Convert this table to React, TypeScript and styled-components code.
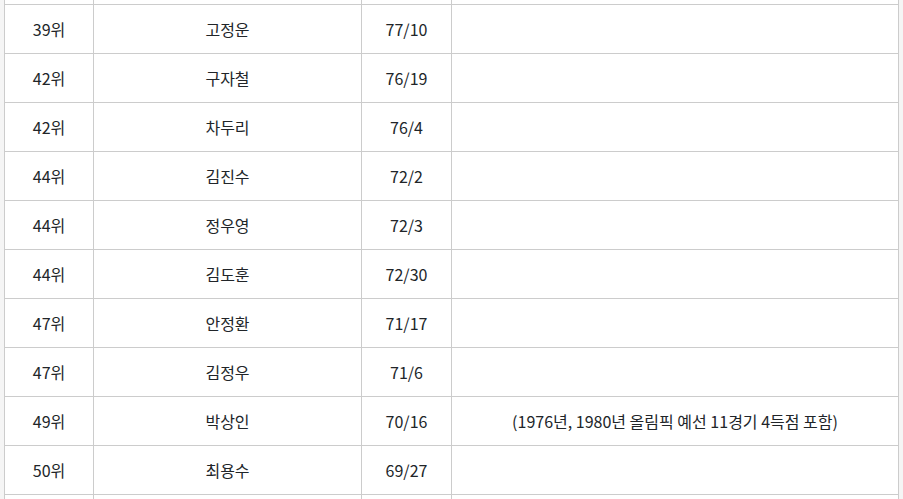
import React from "react";
import styled, { createGlobalStyle } from "styled-components";

const Global = createGlobalStyle`
  html, body { margin: 0; padding: 0; background: #f5f5f5; }
  body { font-family: "Noto Sans CJK KR", "Noto Sans", sans-serif; overflow: hidden; }
`;

const Page = styled.div`
  height: 499px;
  overflow: hidden;
  padding: 0 5px 0 4px;
  background: #f5f5f5;
`;

const Table = styled.table`
  width: 894px;
  margin-top: -45px;
  border-collapse: collapse;
  table-layout: fixed;
  background: #ffffff;
  color: #212529;
  font-size: 16px;
`;

const Cell = styled.td<{ $w: number }>`
  width: ${(p) => p.$w}px;
  height: 49px;
  padding: 0 10px;
  border: 1px solid #cccccc;
  text-align: center;
  vertical-align: middle;
  line-height: 24px;
  box-sizing: border-box;
`;

const rows: [string, string, string, string][] = [
  ["", "", "", ""],
  ["39위", "고정운", "77/10", ""],
  ["42위", "구자철", "76/19", ""],
  ["42위", "차두리", "76/4", ""],
  ["44위", "김진수", "72/2", ""],
  ["44위", "정우영", "72/3", ""],
  ["44위", "김도훈", "72/30", ""],
  ["47위", "안정환", "71/17", ""],
  ["47위", "김정우", "71/6", ""],
  ["49위", "박상인", "70/16", "(1976년, 1980년 올림픽 예선 11경기 4득점 포함)"],
  ["50위", "최용수", "69/27", ""],
  ["", "", "", ""],
];

const widths = [89, 268, 90, 447];

export default function App() {
  return (
    <Page>
      <Global />
      <Table>
        <tbody>
          {rows.map((r, i) => (
            <tr key={i}>
              {r.map((c, j) => (
                <Cell key={j} $w={widths[j]}>
                  {c}
                </Cell>
              ))}
            </tr>
          ))}
        </tbody>
      </Table>
    </Page>
  );
}
